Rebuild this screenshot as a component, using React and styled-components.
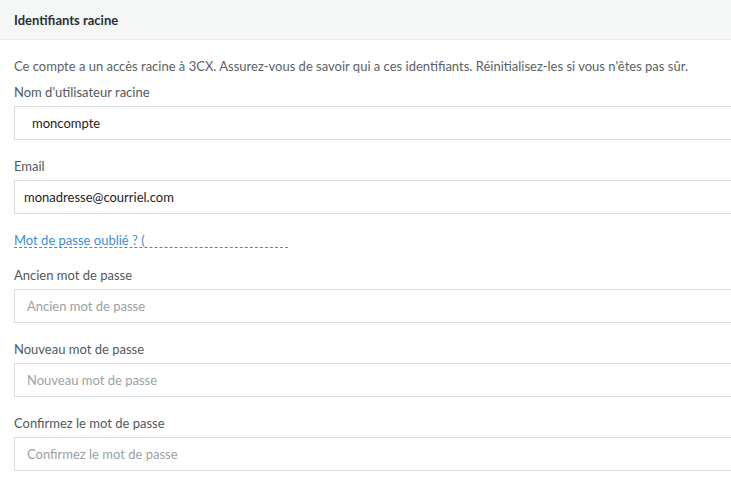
import styled, { createGlobalStyle } from "styled-components";

const GlobalStyle = createGlobalStyle`
  body {
    margin: 0;
    background: #ffffff;
    font-family: "Lato", "Open Sans", sans-serif;
    overflow: hidden;
  }
`;

const fields = [
  { id: "user", label: "Nom d'utilisateur racine", value: "moncompte", indent: 17 },
  { id: "email", label: "Email", value: "monadresse@courriel.com", indent: 9 },
];

const passwords = [
  { id: "old", label: "Ancien mot de passe" },
  { id: "new", label: "Nouveau mot de passe" },
  { id: "confirm", label: "Confirmez le mot de passe" },
];

export default function App() {
  return (
    <>
      <GlobalStyle />
      <Panel>
        <Header>Identifiants racine</Header>
        <Body>
          <Intro>
            Ce compte a un accès racine à 3CX. Assurez-vous de savoir qui a ces
            identifiants. Réinitialisez-les si vous n'êtes pas sûr.
          </Intro>
          {fields.map((f, i) => (
            <Field key={f.id} $gap={i === 0 ? 9 : 18}>
              <Label htmlFor={f.id}>{f.label}</Label>
              <Input id={f.id} defaultValue={f.value} $indent={f.indent} />
            </Field>
          ))}
          <ForgotLink href="#">Mot de passe oublié ? (</ForgotLink>
          {passwords.map((p, i) => (
            <Field key={p.id} $gap={i === 0 ? 19 : 18}>
              <Label htmlFor={p.id}>{p.label}</Label>
              <Input id={p.id} type="password" placeholder={p.label} $indent={12} />
            </Field>
          ))}
        </Body>
      </Panel>
    </>
  );
}

const Panel = styled.section`
  width: 731px;
  overflow: hidden;
`;

const Header = styled.h2`
  margin: 0;
  height: 40px;
  box-sizing: border-box;
  padding: 0 14px;
  display: flex;
  align-items: center;
  background: #f5f7f7;
  border-bottom: 1px solid #e6eaea;
  font-size: 13px;
  font-weight: 700;
  color: #2b2f31;
`;

const Body = styled.div`
  padding: 18px 0 0 14px;
  display: flex;
  flex-direction: column;
`;

const Intro = styled.p`
  margin: 0;
  font-size: 13px;
  line-height: 17px;
  color: #5c6266;
  white-space: nowrap;
`;

const Field = styled.div`
  display: flex;
  flex-direction: column;
  margin-top: ${(p) => p.$gap}px;
`;

const Label = styled.label`
  font-size: 13px;
  line-height: 17px;
  color: #50595e;
  margin-bottom: 5px;
`;

const Input = styled.input`
  width: 760px;
  height: 34px;
  box-sizing: border-box;
  border: 1px solid #d6dddd;
  border-radius: 0;
  outline: none;
  padding: 0 0 0 ${(p) => p.$indent}px;
  font-family: inherit;
  font-size: 13px;
  color: #1f2326;
  background: #ffffff;
  &::placeholder {
    color: #9ba1a4;
  }
`;

const ForgotLink = styled.a`
  align-self: flex-start;
  margin-top: 20px;
  width: 274px;
  font-size: 13px;
  line-height: 13px;
  color: #3d8ed8;
  text-decoration: none;
  border-bottom: 1px dashed #3d8ed8;
`;
